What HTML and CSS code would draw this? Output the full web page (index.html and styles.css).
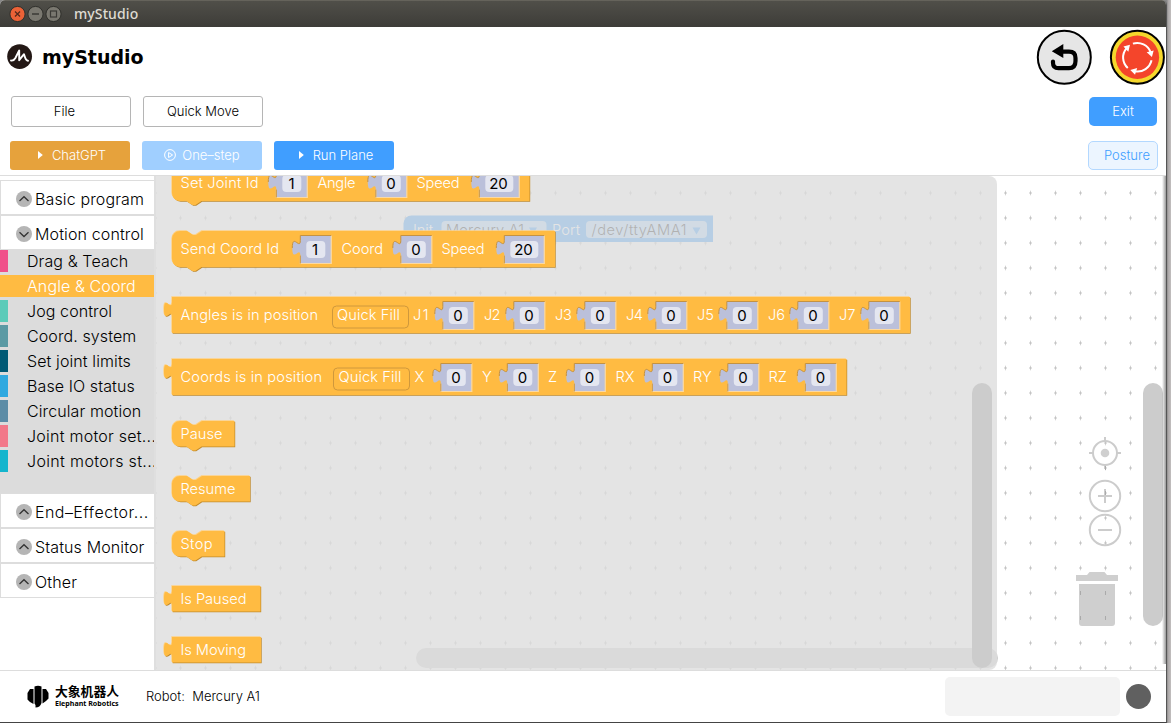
FILE: index.html
```html
<!DOCTYPE html>
<html lang="en">
<head>
<meta charset="utf-8">
<title>myStudio</title>
<link rel="stylesheet" href="styles.css">
</head>
<body>
<div class="window">
  <div class="titlebar">
    <svg class="controls" width="56" height="18" viewBox="0 0 56 18">
      <circle cx="9.5" cy="9" r="7.6" fill="#ec6237" stroke="#30302c"/>
      <path d="M7 6.5l5 5m0-5l-5 5" stroke="#57291b" stroke-width="1.3"/>
      <circle cx="27.5" cy="9" r="7.6" fill="#7a7870" stroke="#30302c"/>
      <path d="M24 9h7" stroke="#3b3a36" stroke-width="1.3"/>
      <circle cx="45.5" cy="9" r="7.6" fill="#7a7870" stroke="#30302c"/>
      <rect x="42.5" y="6" width="6" height="6" fill="none" stroke="#3b3a36" stroke-width="1.2"/>
    </svg>
    <span class="titletext">myStudio</span>
  </div>

  <header class="brandbar">
    <svg width="26" height="26" viewBox="0 0 26 26">
      <circle cx="12.600" cy="12.600" r="12.400" fill="#231815"/>
      <path d="M4 16.500C6.500 17 7.400 15.800 8.400 14L12.200 6.500V16.200L17 10.200C18 13 18.400 16.600 21 16.700" fill="none" stroke="#fff" stroke-width="1.900" stroke-linejoin="round" stroke-linecap="round"/>
    </svg>
    <h1 class="brand">myStudio</h1>
    <div class="round-buttons">
      <svg width="56" height="56" viewBox="0 0 56 56">
        <circle cx="28.300" cy="28.300" r="26.500" fill="#e6e6e6" stroke="#000" stroke-width="2"/>
        <path d="M24 22.700H33Q39.500 22.700 39.500 29V32Q39.500 39.200 33 39.200H22.500Q17 39.200 17 34V32.500" fill="none" stroke="#000" stroke-width="4.200" stroke-linecap="round"/>
        <path d="M15.800 22.300L27.300 15V29Z"/>
      </svg>
      <svg width="56" height="56" viewBox="0 0 56 56">
        <g transform="translate(.4 .3)">
          <circle cx="28" cy="28" r="26.500" fill="#f5d72c" stroke="#000" stroke-width="2"/>
          <circle cx="28" cy="28" r="21.700" fill="#f4452b"/>
          <g id="arrow" fill="#fff">
            <path d="M23.500 14.300A14.300 14.300 0 0 1 41.300 23" fill="none" stroke="#fff" stroke-width="2"/>
            <path d="M37.300 22.900L44.300 21.300L42.500 27.800Z"/>
          </g>
          <use href="#arrow" transform="rotate(120 28 28)"/>
          <use href="#arrow" transform="rotate(240 28 28)"/>
        </g>
      </svg>
    </div>
  </header>

  <div class="menubar">
    <button class="btn plain file">File</button>
    <button class="btn plain">Quick Move</button>
    <button class="btn exit">Exit</button>
  </div>

  <div class="runbar">
    <button class="btn chat"><svg width="12" height="12" viewBox="0 0 12 12"><path d="M4 2L8.800 6L4 10Z" fill="#fff"/></svg>ChatGPT</button>
    <button class="btn step"><svg width="12" height="12" viewBox="0 0 12 12" fill="none" stroke="#fff"><circle cx="6" cy="6" r="5.400"/><path d="M4.600 3.500L8.600 6L4.600 8.500Z"/></svg>One–step</button>
    <button class="btn run"><svg width="12" height="12" viewBox="0 0 12 12"><path d="M4 2L8.800 6L4 10Z" fill="#fff"/></svg>Run Plane</button>
    <button class="btn posture">Posture</button>
  </div>

  <main class="editor">
    <nav class="toolbox">
      <div class="group"><svg class="chev" viewBox="0 0 16 16"><circle cx="8" cy="8" r="8"/><path d="M3.500 10L8 5.700L12.500 10"/></svg>Basic program</div>
      <div class="group"><svg class="chev" viewBox="0 0 16 16"><circle cx="8" cy="8" r="8"/><path d="M3.500 6.200L8 10.500L12.500 6.200"/></svg>Motion control</div>
      <div class="items">
        <div class="item pink">Drag &amp; Teach</div>
        <div class="item selected">Angle &amp; Coord</div>
        <div class="item mint">Jog control</div>
        <div class="item teal">Coord. system</div>
        <div class="item navy">Set joint limits</div>
        <div class="item sky">Base IO status</div>
        <div class="item steel">Circular motion</div>
        <div class="item rose">Joint motor set...</div>
        <div class="item cyan">Joint motors st...</div>
      </div>
      <div class="group spaced"><svg class="chev" viewBox="0 0 16 16"><circle cx="8" cy="8" r="8"/><path d="M3.500 10L8 5.700L12.500 10"/></svg>End–Effector...</div>
      <div class="group"><svg class="chev" viewBox="0 0 16 16"><circle cx="8" cy="8" r="8"/><path d="M3.500 10L8 5.700L12.500 10"/></svg>Status Monitor</div>
      <div class="group"><svg class="chev" viewBox="0 0 16 16"><circle cx="8" cy="8" r="8"/><path d="M3.500 10L8 5.700L12.500 10"/></svg>Other</div>
    </nav>

    <svg class="canvas" width="1012" height="494" viewBox="154 176 1012 494">
      <defs>
        <pattern id="grid" x="-7" y="5.500" width="25" height="25" patternUnits="userSpaceOnUse">
          <path d="M12.500 10.500v4M11 12.500h3" stroke="#c4c4c4"/>
        </pattern>
        <linearGradient id="edge">
          <stop offset="0" stop-color="#000" stop-opacity="0"/>
          <stop offset="1" stop-color="#000" stop-opacity=".4"/>
        </linearGradient>
        <g id="slot">
          <path d="M0 0H31V28H0V20c0-10-8 8-8-7.500s8 2.500 8-7.500Z" fill="#bbc0da"/>
          <path d="M31 0V28H0V20" fill="none" stroke="#fcd9a0" stroke-width="1.200"/>
          <path d="M0 28V20M0 5V0H31M0 5c0 10-8-8-8 7.500" fill="none" stroke="#c49242"/>
          <rect x="6" y="5.500" width="19" height="17" rx="4" fill="#e4e6f0"/>
        </g>
        <g id="wideslot">
          <path d="M0 0H40V28H0V20c0-10-8 8-8-7.500s8 2.500 8-7.500Z" fill="#bbc0da"/>
          <path d="M40 0V28H0V20" fill="none" stroke="#fcd9a0" stroke-width="1.200"/>
          <path d="M0 28V20M0 5V0H40M0 5c0 10-8-8-8 7.500" fill="none" stroke="#c49242"/>
          <rect x="6" y="5.500" width="28" height="17" rx="4" fill="#e4e6f0"/>
        </g>
        <g id="blocks">
          <path d="M172 173a8 8 0 0 1 8-8H529.500V201H201.500l-6 4h-3l-6-4H180a8 8 0 0 1-8-8Z"/>
          <path d="M172 239a8 8 0 0 1 8-8H187l6 4h3l6-4H555V267H201.500l-6 4h-3l-6-4H180a8 8 0 0 1-8-8Z"/>
          <path d="M172 297H910V333H172V317c0-10-8 8-8-7.500s8 2.500 8-7.500Z"/>
          <path d="M172 359H846.500V395H172V379c0-10-8 8-8-7.500s8 2.500 8-7.500Z"/>
          <path d="M172 429a8 8 0 0 1 8-8H187l6 4h3l6-4H234.500V446.500H201.500l-6 4h-3l-6-4H180a8 8 0 0 1-8-8Z"/>
          <path d="M172 484a8 8 0 0 1 8-8H187l6 4h3l6-4H250V501.500H201.500l-6 4h-3l-6-4H180a8 8 0 0 1-8-8Z"/>
          <path d="M172 539a8 8 0 0 1 8-8H187l6 4h3l6-4H224.500V556.500H201.500l-6 4h-3l-6-4H180a8 8 0 0 1-8-8Z"/>
          <path d="M172 586H260.500V611.500H172V606c0-10-8 8-8-7.500s8 2.500 8-7.500Z"/>
          <path d="M172 637H261V662.500H172V657c0-10-8 8-8-7.500s8 2.500 8-7.500Z"/>
        </g>
      </defs>

      <rect x="154" y="176" width="1012" height="494" fill="#fff"/>
      <rect x="154" y="176" width="1011" height="494" fill="url(#grid)"/>
      <path d="M403.500 242V223.500a8 8 0 0 1 8-8H713V242Z" fill="#1e90ff"/>
      <rect x="441.500" y="221" width="105" height="17" rx="4" fill="#a5d3ff"/>
      <rect x="586" y="221" width="121" height="17" rx="4" fill="#a5d3ff"/>
      <g class="label">
        <text x="413" y="234.500" textLength="20">Init</text>
        <text x="552" y="234.500" textLength="28">Port</text>
      </g>
      <g class="value">
        <text x="446" y="235" textLength="78">Mercury A1</text>
        <text x="591.500" y="235" textLength="95">/dev/ttyAMA1</text>
      </g>
      <path d="M529 227.500h8l-4 7ZM692.500 227.500h8l-4 7Z" fill="#1e90ff"/>
      <rect x="416" y="648" width="582" height="20" rx="10" fill="#ccc"/>

      <path d="M154 176H989a8 8 0 0 1 8 8V662a8 8 0 0 1-8 8H154Z" fill="#ddd" fill-opacity=".8"/>
      <path d="M155 176V670" stroke="#dfdfdf" stroke-width="2"/>

      <use href="#blocks" class="block-shade" x=".7" y=".7"/>
      <use href="#blocks" class="block-light" x="-.7" y="-.7"/>
      <use href="#blocks" class="block-face"/>

      <g class="quick">
        <rect x="332.500" y="306" width="76" height="22" rx="4"/>
        <rect x="333.500" y="368" width="76" height="22" rx="4"/>
      </g>

      <g transform="translate(-.2 0)">
        <use href="#slot" x="276.500" y="169.500"/><use href="#slot" x="376" y="169.500"/><use href="#wideslot" x="479.500" y="169.500"/>
        <use href="#slot" x="300.500" y="235.500"/><use href="#slot" x="401" y="235.500"/><use href="#wideslot" x="504.500" y="235.500"/>
        <use href="#slot" x="443" y="301.500"/><use href="#slot" x="514" y="301.500"/><use href="#slot" x="585" y="301.500"/><use href="#slot" x="656" y="301.500"/><use href="#slot" x="727" y="301.500"/><use href="#slot" x="798" y="301.500"/><use href="#slot" x="869" y="301.500"/>
        <use href="#slot" x="441" y="363.500"/><use href="#slot" x="507.500" y="363.500"/><use href="#slot" x="574.500" y="363.500"/><use href="#slot" x="652.500" y="363.500"/><use href="#slot" x="728" y="363.500"/><use href="#slot" x="805.500" y="363.500"/>
      </g>

      <g class="label">
        <text x="180.500" y="188" textLength="78">Set Joint Id</text><text x="317.500" y="188" textLength="38">Angle</text><text x="416.500" y="188" textLength="43">Speed</text>
        <text x="180.500" y="254" textLength="98.500">Send Coord Id</text><text x="341.500" y="254" textLength="41.500">Coord</text><text x="441.500" y="254" textLength="43">Speed</text>
        <text x="180.500" y="320" textLength="137.500">Angles is in position</text><text x="337" y="320" textLength="63">Quick Fill</text>
        <text x="413" y="320" textLength="15.500">J1</text><text x="484" y="320" textLength="16.500">J2</text><text x="555" y="320" textLength="17">J3</text><text x="626" y="320" textLength="17">J4</text><text x="697" y="320" textLength="17">J5</text><text x="768" y="320" textLength="17">J6</text><text x="839" y="320" textLength="16.500">J7</text>
        <text x="180.500" y="382" textLength="141.500">Coords is in position</text><text x="338.500" y="382" textLength="63">Quick Fill</text>
        <text x="414.500" y="382">X</text><text x="482" y="382">Y</text><text x="548" y="382">Z</text><text x="615.500" y="382">RX</text><text x="693" y="382">RY</text><text x="768.500" y="382">RZ</text>
        <text x="180.500" y="439" textLength="42">Pause</text>
        <text x="180.500" y="494" textLength="55">Resume</text>
        <text x="180.500" y="549" textLength="32">Stop</text>
        <text x="180.500" y="604" textLength="66">Is Paused</text>
        <text x="180.500" y="655" textLength="65.500">Is Moving</text>
      </g>
      <g class="value centered" transform="translate(-.5 0)">
        <text x="292" y="189">1</text><text x="391.500" y="189">0</text><text x="499" y="189">20</text>
        <text x="315.500" y="255">1</text><text x="416.500" y="255">0</text><text x="524" y="255">20</text>
        <text x="458.500" y="321">0</text><text x="529.500" y="321">0</text><text x="600.500" y="321">0</text><text x="671.500" y="321">0</text><text x="742.500" y="321">0</text><text x="813.500" y="321">0</text><text x="884.500" y="321">0</text>
        <text x="456.500" y="383">0</text><text x="523" y="383">0</text><text x="590" y="383">0</text><text x="668" y="383">0</text><text x="743.500" y="383">0</text><text x="821" y="383">0</text>
      </g>

      <rect x="972" y="383" width="20" height="285" rx="10" fill="#ccc"/>
      <rect x="1143" y="383" width="20" height="243" rx="10" fill="#ccc"/>
      <rect x="1162" y="176" width="4" height="488" fill="url(#edge)"/>

      <g class="tools">
        <circle cx="1105" cy="453" r="12"/>
        <path d="M1105 437v5M1105 464v5M1089 453h5M1116 453h5"/>
        <circle cx="1105" cy="453" r="4.300" class="solid"/>
        <circle cx="1105" cy="496" r="15.200"/>
        <path d="M1105 489v14M1098 496h14"/>
        <circle cx="1105" cy="530" r="15.200"/>
        <path d="M1098 530h14"/>
        <path class="solid" d="M1076 575H1087l2.500-3h15l2.500 3H1118V581H1076ZM1079 584H1115V623a3 3 0 0 1-3 3H1082a3 3 0 0 1-3-3Z"/>
      </g>
      <path d="M1080.500 591v4M1105.500 591v4M1080.500 616v4M1105.500 616v4M1105.500 466v4M1105.500 491v4" stroke="#aaa"/>
    </svg>
  </main>

  <footer class="status">
    <svg class="elephant" width="22" height="24" viewBox="0 0 22 24">
      <path d="M6.500 4H3L.5 8V14.500L3 17L6.500 19ZM15.500 4H19L21.500 8V13.500L19 16L15.500 18.500Z"/>
      <path d="M7.500 1.500Q11 0 14.500 1.500V18Q13 22.500 8.500 22.500V20L7.500 18.500Z"/>
    </svg>
    <div class="company"><span class="cn">大象机器人</span><span class="en">Elephant Robotics</span></div>
    <span class="robot">Robot:&nbsp; Mercury A1</span>
    <div class="message"></div>
    <div class="lamp"></div>
  </footer>
</div>
</body>
</html>
```
FILE: styles.css
```css
* { box-sizing: border-box; }
body {
  margin: 0;
  width: 1171px;
  height: 723px;
  overflow: hidden;
  background: linear-gradient(90deg, #888 0, #888 1167px, #aaa6a6 1168px, #c2bfbf 1171px);
  font-family: Inter, "Noto Sans CJK SC", sans-serif;
  font-weight: 300;
  color: #000;
}
.window {
  display: flex;
  flex-direction: column;
  width: 1167px;
  height: 723px;
  border-right: 1px solid #555;
  border-bottom: 1px solid #444;
  border-radius: 5px 5px 0 0;
  background: #fff;
  overflow: hidden;
}
.titlebar {
  display: flex;
  align-items: center;
  flex: none;
  height: 27px;
  padding: 0 0 0 8px;
  border-top: 1px solid #65635b;
  background: linear-gradient(#504f49, #3d3c38);
}
.titletext {
  margin-left: 10px;
  font: 500 14px/18px "Noto Sans", sans-serif;
  letter-spacing: .1px;
  color: #dfdbd2;
}
.brandbar {
  display: flex;
  align-items: center;
  flex: none;
  height: 60px;
  padding-left: 7px;
}
.brand {
  margin: 0 0 0 9px;
  font: bold 19px/24px "DejaVu Sans", sans-serif;
  color: #000;
}
.round-buttons {
  display: flex;
  gap: 17px;
  margin: 0 1px 0 auto;
}
.menubar, .runbar {
  display: flex;
  align-items: center;
  flex: none;
  padding: 0 8px 0 11px;
  gap: 12px;
}
.menubar { height: 48px; padding-right: 9px; }
.runbar { height: 41px; padding-left: 10px; align-items: flex-start; padding-top: 6px; border-bottom: 1px solid #ddd; }
.btn {
  display: flex;
  align-items: center;
  justify-content: center;
  gap: 6px;
  width: 120px;
  height: 29px;
  padding: 0 0 1px;
  border: 0;
  border-radius: 3px;
  font: 300 13px/16px Inter, sans-serif;
  color: #fff;
}
.plain { height: 31px; padding: 0; border: 1px solid #b5b5b5; background: #fff; color: #000; }
.file { padding-right: 13px; }
.exit { width: 68px; margin-left: auto; border-radius: 5px; background: #409eff; }
.chat { background: #e6a23c; }
.step { background: #a0cfff; }
.run { background: #409eff; }
.posture {
  width: 70px;
  margin-left: auto;
  padding-left: 8px;
  border: 1px solid #b3d8ff;
  border-radius: 5px;
  background: #ecf5ff;
  color: #409eff;
}
.editor { display: flex; flex: none; height: 494px; }
.toolbox { flex: none; width: 154px; padding-top: 4px; background: #fff; }
.group {
  display: flex;
  align-items: center;
  height: 35px;
  padding: 2px 0 0 15px;
  gap: 3px;
  border: 1px solid #ddd;
  border-right: 0;
  font-size: 16px;
  letter-spacing: .13px;
  white-space: nowrap;
}
.spaced { letter-spacing: .45px; }
.chev { flex: none; width: 16px; height: 16px; fill: #b5b5b5; }
.chev path { fill: none; stroke: #333; stroke-width: 1.3; }
.items { height: 243px; background: #dcdcdc; }
.item {
  height: 22px;
  margin-bottom: 3px;
  padding-left: 19px;
  border-left: 8px solid;
  font-size: 16px;
  line-height: 23px;
  letter-spacing: .1px;
  white-space: nowrap;
}
.pink { border-color: #f0508a; }
.selected { border-color: #ffbb42; background: #ffbb42; color: #fff; }
.mint { border-color: #5bcbb9; }
.teal { border-color: #5b9aa4; }
.navy { border-color: #005975; }
.sky { border-color: #2fa9e0; }
.steel { border-color: #5c8ca6; }
.rose { border-color: #f27889; letter-spacing: .25px; }
.cyan { border-color: #14b5cd; letter-spacing: .35px; }
.canvas { display: block; flex: none; }
.canvas text { font-family: Inter, sans-serif; font-size: 14.67px; }
.label { fill: #fff; }
.value { fill: #000; }
.centered { text-anchor: middle; font-weight: 400; }
.centered text { font-size: 15px; }
.block-face { fill: #ffbb42; }
.block-shade { fill: #c08a2c; }
.block-light { fill: #ffd080; }
.quick rect { fill: none; stroke: #cf983c; }
.tools { fill: none; stroke: #ccc; stroke-width: 2; }
.tools .solid { fill: #ccc; fill-opacity: .95; stroke: none; }
.status {
  display: flex;
  align-items: center;
  flex: 1;
  border-top: 1px solid #ddd;
  padding-left: 27px;
}
.company { display: flex; flex-direction: column; width: 65px; margin: 0 0 0 6px; white-space: nowrap; }
.cn { font: bold 12.8px/14px "Noto Sans CJK SC", sans-serif; color: #000; }
.en { font: bold 7.1px/11px "Noto Sans", sans-serif; color: #000; }
.robot { margin: -1px 0 0 26px; font-size: 13px; }
.message { width: 175px; height: 39px; margin-left: auto; border-radius: 5px; background: #f3f3f3; }
.lamp { width: 25px; height: 25px; margin: 0 15px 0 6px; border-radius: 50%; background: #606060; }
```
